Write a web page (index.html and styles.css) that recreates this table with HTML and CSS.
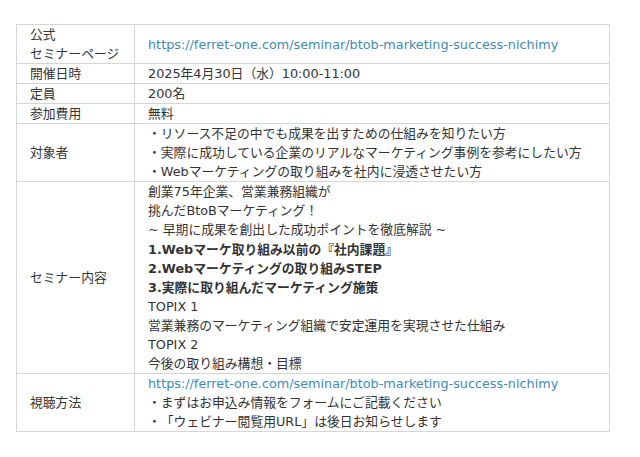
FILE: index.html
```
<!DOCTYPE html>
<html lang="ja">
<head>
<meta charset="utf-8">
<link rel="stylesheet" href="styles.css">
</head>
<body>
<div class="wrap">
<table class="info">
<tr><th>公式<br>セミナーページ</th><td><a class="link" href="#">https://ferret-one.com/seminar/btob-marketing-success-nichimy</a></td></tr>
<tr><th>開催日時</th><td>2025年4月30日（水）10:00-11:00</td></tr>
<tr><th>定員</th><td>200名</td></tr>
<tr><th>参加費用</th><td>無料</td></tr>
<tr><th>対象者</th><td>・リソース不足の中でも成果を出すための仕組みを知りたい方<br>・実際に成功している企業のリアルなマーケティング事例を参考にしたい方<br>・Webマーケティングの取り組みを社内に浸透させたい方</td></tr>
<tr><th>セミナー内容</th><td>創業75年企業、営業兼務組織が<br>挑んだBtoBマーケティング！<br>~ 早期に成果を創出した成功ポイントを徹底解説 ~<br><b>1.Webマーケ取り組み以前の『社内課題』</b><br><b>2.Webマーケティングの取り組みSTEP</b><br><b>3.実際に取り組んだマーケティング施策</b><br>TOPIX 1<br>営業兼務のマーケティング組織で安定運用を実現させた仕組み<br>TOPIX 2<br>今後の取り組み構想・目標</td></tr>
<tr><th>視聴方法</th><td><a class="link" href="#">https://ferret-one.com/seminar/btob-marketing-success-nichimy</a><br>・まずはお申込み情報をフォームにご記載ください<br>・「ウェビナー閲覧用URL」は後日お知らせします</td></tr>
</table>
</div>
</body>
</html>
```
FILE: styles.css
```
html, body {
  margin: 0;
  padding: 0;
  background: #fff;
}
body {
  font-family: "DejaVu Sans", "Noto Sans CJK JP", sans-serif;
  font-size: 12.8px;
  line-height: 19.05px;
  color: #333;
  text-spacing-trim: space-all;
}
.wrap {
  padding: 24px 31px 0 16px;
}
.info {
  width: 594px;
  border-collapse: collapse;
}
.info th, .info td {
  border: 1px solid #d6d6d6;
  padding: 0 13px;
  vertical-align: middle;
  text-align: left;
}
.info th {
  width: 91px;
  font-weight: normal;
}
.info b {
  font-weight: bold;
}
.link {
  color: #3f8bb5;
  text-decoration: none;
}
```
